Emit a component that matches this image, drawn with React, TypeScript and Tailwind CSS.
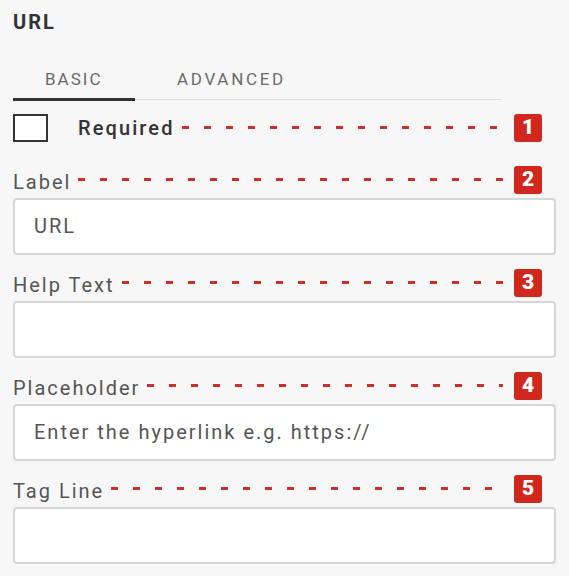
import React from "react";

function Badge({ n }: { n: number }) {
  return (
    <span className="flex h-[28px] w-[28px] shrink-0 items-center justify-center rounded-[3px] bg-[#d0281c] font-['Roboto',sans-serif] text-[21px] font-black leading-none text-white">
      {n}
    </span>
  );
}

function Dashes() {
  return (
    <div className="ml-[7px] mr-[11px] h-[3px] flex-1 bg-[repeating-linear-gradient(to_right,#c9302a_0_7px,transparent_7px_22px)]" />
  );
}

function Field({
  label,
  n,
  value,
}: {
  label: string;
  n: number;
  value?: string;
}) {
  return (
    <div className="mt-[14px] first:mt-0">
      <div className="mr-[14px] flex h-[28px] items-center">
        <span className="pt-[4px] text-[20px] tracking-[2px] text-[#555]">
          {label}
        </span>
        <Dashes />
        <Badge n={n} />
      </div>
      <div className="mt-[4px] flex h-[57px] items-center rounded-[4px] border-2 border-[#d6d6d6] bg-white px-[19px] text-[20px] tracking-[2px] text-[#555]">
        {value}
      </div>
    </div>
  );
}

export default function App() {
  return (
    <div className="min-h-[576px] bg-[#f7f7f7] px-[13px] pt-[7px] font-['Roboto',sans-serif]">
      <h1 className="text-[20px] font-bold tracking-[2px] text-[#333]">URL</h1>

      <div className="mt-[30px] mr-[54px] flex border-b border-[#dcdcdc] text-[17px] text-[#6a6a6a]">
        <div className="mb-[-2px] w-[122px] border-b-[3px] border-[#333] pb-[5px] pl-[32px] tracking-[2px]">
          BASIC
        </div>
        <div className="pb-[5px] pl-[42px] tracking-[2.7px]">ADVANCED</div>
      </div>

      <div className="mt-[14px] mr-[14px] flex h-[28px] items-center">
        <span className="h-[28px] w-[35px] shrink-0 border-2 border-[#333] bg-white" />
        <span className="ml-[30px] text-[20px] font-medium tracking-[2.1px] text-[#333]">
          Required
        </span>
        <Dashes />
        <Badge n={1} />
      </div>

      <div className="mt-[24px]">
        <Field label="Label" n={2} value="URL" />
        <Field label="Help Text" n={3} />
        <Field label="Placeholder" n={4} value="Enter the hyperlink e.g. https://" />
        <Field label="Tag Line" n={5} />
      </div>
    </div>
  );
}
